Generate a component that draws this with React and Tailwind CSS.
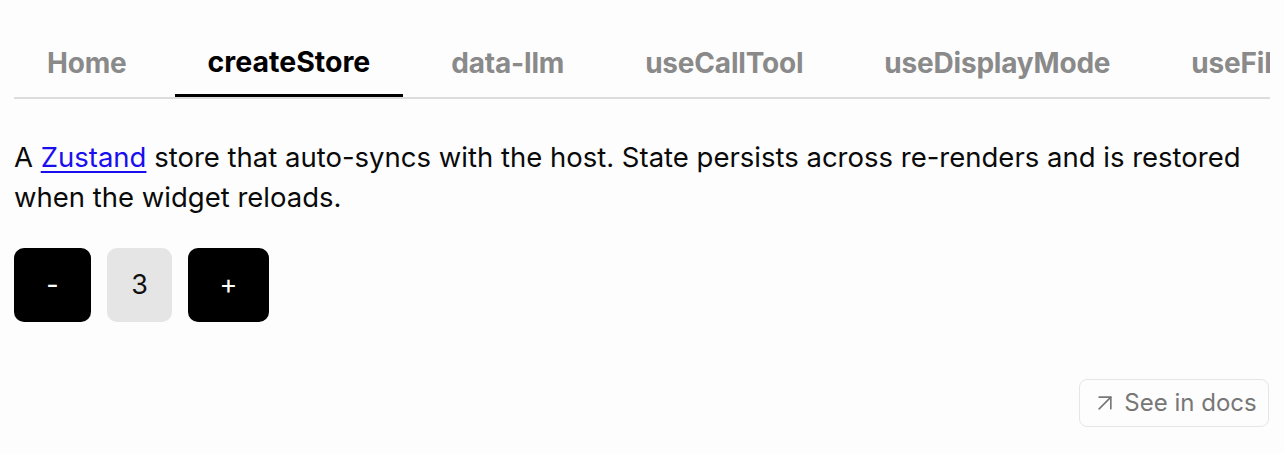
import React from "react";
import { ArrowUpRight } from "lucide-react";

const tabs = ["Home", "createStore", "data-llm", "useCallTool", "useDisplayMode", "useFiles", "useLayout"];

export default function App() {
  return (
    <div className="min-h-[454px] w-[1284px] bg-[#fdfdfd] px-[14px] pt-[31px] font-['Inter',sans-serif] text-black">
      <div className="flex overflow-hidden border-b-2 border-[#dcdcdc] gap-[15px]">
        {tabs.map((t) => {
          const active = t === "createStore";
          return (
            <div
              key={t}
              className={
                "shrink-0 h-[66px] px-[33px] flex items-center border-b-[3px] font-bold whitespace-nowrap " +
                (active ? "text-[28.5px] border-black text-black" : "text-[28px] tracking-[-0.2px] border-transparent text-[#8a8a8a]")
              }
            >
              {t}
            </div>
          );
        })}
      </div>
      <p className="mt-[38px] text-[27.5px] leading-[40px] text-[#0a0a0a]">
        A{" "}
        <a href="#" className="text-[#1a0dee] underline underline-offset-[4px]">
          Zustand
        </a>{" "}
        store that auto-syncs with the host. State persists across re-renders and is restored when the widget reloads.
      </p>
      <div className="mt-[31px] flex gap-[16px] text-[27px]">
        <button className="w-[77px] h-[74px] rounded-[10px] bg-black text-white flex items-center justify-center">-</button>
        <div className="w-[65px] h-[74px] rounded-[10px] bg-[#e5e5e5] text-[#111] flex items-center justify-center">3</div>
        <button className="w-[81px] h-[74px] rounded-[10px] bg-black text-white flex items-center justify-center">+</button>
      </div>
      <div className="mt-[57px] flex justify-end pr-[1px]">
        <button className="h-[48px] w-[190px] rounded-[8px] border border-[#e6e6e6] flex items-center justify-center gap-[5px] text-[24px] text-[#777]">
          <ArrowUpRight size={28} strokeWidth={1.4} />
          See in docs
        </button>
      </div>
    </div>
  );
}
